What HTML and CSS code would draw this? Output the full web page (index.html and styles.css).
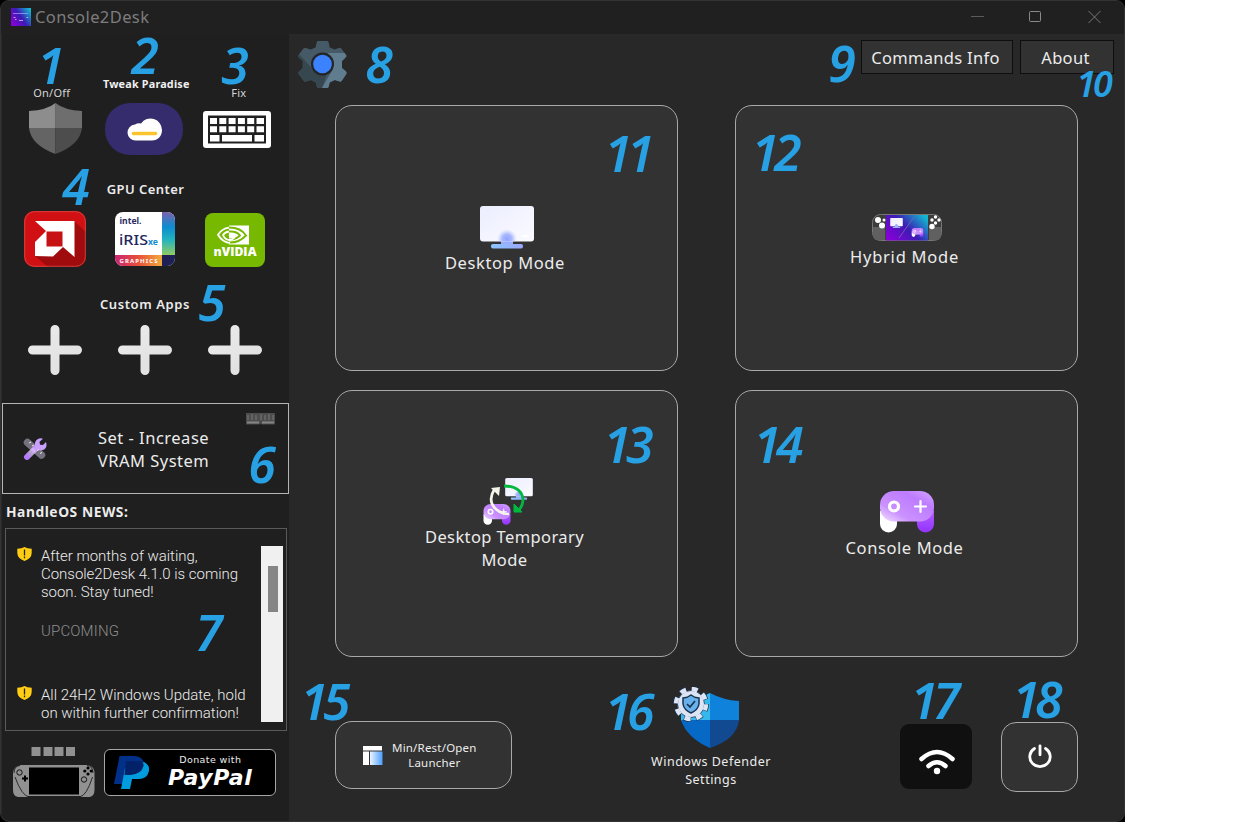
FILE: index.html
```html
<!DOCTYPE html>
<html lang="en">
<head>
<meta charset="utf-8">
<title>Console2Desk</title>
<link rel="stylesheet" href="styles.css">
</head>
<body>
<svg class="defs" width="0" height="0" aria-hidden="true">
  <defs>
    <linearGradient id="pad" x1="0" y1="1" x2="1" y2="0"><stop offset="0" stop-color="#f4e6ff"/><stop offset=".3" stop-color="#cb91ff"/><stop offset=".7" stop-color="#bd7cff"/><stop offset="1" stop-color="#d6a6ff"/></linearGradient>
    <linearGradient id="leg" x1="0" y1="0" x2="0" y2="1"><stop offset="0" stop-color="#b25cff"/><stop offset="1" stop-color="#9333ff"/></linearGradient>
    <linearGradient id="scr" x1="0" y1="0" x2="1" y2="1"><stop offset="0" stop-color="#eceeff"/><stop offset="1" stop-color="#fafaff"/></linearGradient>
    <linearGradient id="stand" x1="0" y1="0" x2="1" y2="0"><stop offset="0" stop-color="#8cc5ff"/><stop offset="1" stop-color="#9aa8ff"/></linearGradient>
    <radialGradient id="glow"><stop offset="0" stop-color="#8fa2ff"/><stop offset=".5" stop-color="#9dafff" stop-opacity=".85"/><stop offset="1" stop-color="#c8d0ff" stop-opacity="0"/></radialGradient>
    <linearGradient id="neon" x1="0" y1=".8" x2="1" y2=".2"><stop offset="0" stop-color="#8800d8"/><stop offset=".5" stop-color="#3c1bb5"/><stop offset="1" stop-color="#12b5cf"/></linearGradient>
    <linearGradient id="plus" x1="0" y1="0" x2="1" y2="1"><stop offset="0" stop-color="#ececec"/><stop offset="1" stop-color="#dedede"/></linearGradient>
    <clipPath id="screen-clip"><rect width="54" height="35.500" rx="3"/></clipPath>
    <symbol id="monitor" viewBox="0 0 54 43">
      <path d="M21 33h12v6H21z" fill="#9aaeff"/>
      <rect x="11" y="38" width="32" height="4.500" rx="2" fill="url(#stand)"/>
      <rect width="54" height="35.500" rx="3" fill="url(#scr)"/>
      <g clip-path="url(#screen-clip)"><circle cx="27" cy="33" r="10" fill="url(#glow)"/></g>
      <path d="M42 30h6" stroke="#fff" stroke-width="1.500" stroke-linecap="round"/>
    </symbol>
    <symbol id="gamepad" viewBox="0 0 54 42">
      <path d="M0 20h17v13a8.500 8.500 0 0 1-17 0z" fill="#fff"/>
      <path d="M37 20h17v13a8.500 8.500 0 0 1-17 0z" fill="url(#leg)"/>
      <rect width="54" height="30.500" rx="14" fill="url(#pad)"/>
      <circle cx="14" cy="15.500" r="4.500" fill="none" stroke="#fff" stroke-width="3.200"/>
      <path d="M35 15.500h11M40.500 10v11" stroke="#fff" stroke-width="2.200" stroke-linecap="round"/>
    </symbol>
    <symbol id="add" viewBox="0 0 54 50">
      <path d="M22.500 4.500a4.500 4.500 0 0 1 9 0v16h18a4.500 4.500 0 0 1 0 9h-18v16a4.500 4.500 0 0 1-9 0v-16h-18a4.500 4.500 0 0 1 0-9h18z" fill="url(#plus)"/>
    </symbol>
    <symbol id="alert" viewBox="0 0 15 14">
      <path d="M7.500 0Q10 1.700 14.700 1.800V6Q14.500 11.500 7.500 14 .5 11.500.3 6V1.800Q5 1.700 7.500 0z" fill="#ffcd12"/>
      <path d="M7.500 2.600v5.800M7.500 9.600v1.600" stroke="#222" stroke-width="1.300"/>
    </symbol>
  </defs>
</svg>
<div class="window">
  <header class="titlebar">
    <svg class="app-icon" viewBox="0 0 20 18"><rect width="20" height="18" fill="url(#neon)"/><path d="M2 5.500h15" stroke="#c0b7ff" stroke-width="1" opacity=".6"/><path d="M2.500 9.500h2M4 11.500h1.500M15.500 9.500h1.500M8 12.500h4" stroke="#fff" stroke-width="1.200" opacity=".6"/></svg>
    <span class="app-name">Console2Desk</span>
    <svg class="controls" viewBox="0 0 132 14" fill="none" stroke="#777"><path d="M1 6.500h13" stroke="#5b5b5b"/><rect x="59.500" y="1.500" width="11" height="10" rx="1" stroke="#8a8a8a"/><path d="M118.500 1l12 12M130.500 1L118.500 13"/></svg>
  </header>
  <div class="body">
    <aside class="sidebar">
      <section class="tools">
        <div class="tool on-off"><span class="small-label">On/Off</span>
          <svg class="ic-shield" viewBox="0 0 53 51"><path d="M26.500 0Q35 7 53 8v17H26.500z" fill="#6e6e6e"/><path d="M26.500 0Q18 7 0 8v17h26.500z" fill="#8d8d8d"/><path d="M0 25h26.500v26Q2 42 0 25z" fill="#646464"/><path d="M53 25H26.500v26Q51 42 53 25z" fill="#4d4d4d"/></svg></div>
        <div class="tool tweak"><span class="small-label strong">Tweak Paradise</span>
          <svg class="ic-cloud" viewBox="0 0 78 52"><rect width="78" height="52" rx="25" fill="#342c6d"/><path d="M31 37.500a8 8 0 0 1-1-16Q33 19.500 36 20.500a11.500 11.500 0 0 1 21 6.500c0 6-4 10.500-10 10.500z" fill="#fff"/><path d="M28.500 30.500h22" stroke="#fcc42c" stroke-width="3.600" stroke-linecap="round"/></svg></div>
        <div class="tool fix"><span class="small-label">Fix</span>
          <svg class="ic-keys" viewBox="0 0 68 37"><rect width="68" height="37" rx="3" fill="#fff"/><rect x="5" y="4.500" width="58" height="28" fill="#202020"/><g fill="#fff"><path d="M7 7h7v6H7zM16.300 7h7v6h-7zM25.600 7h7v6h-7zM34.900 7h7v6h-7zM44.200 7h7v6h-7zM53.500 7h7.500v6h-7.500zM7 15.300h7v6H7zM16.300 15.300h7v6h-7zM25.600 15.300h7v6h-7zM34.900 15.300h7v6h-7zM44.200 15.300h7v6h-7zM53.500 15.300h7.500v6h-7.500zM7 24h9.500v6.500H7zM19 24h30v6.500H19zM51.500 24H61v6.500h-9.500z"/></g></svg></div>
      </section>
      <h2 class="group-title gpu-title">GPU Center</h2>
      <div class="trio gpu">
        <svg class="ic-amd" viewBox="0 0 62 56"><defs><clipPath id="amdc"><rect width="62" height="56" rx="10"/></clipPath></defs><g clip-path="url(#amdc)"><rect width="62" height="56" fill="#d01012"/><path d="M50 10l12 11v35H24L11 45z" fill="#a00c0d"/><path d="M11 10h39.500v36L39 36H22V20z" fill="#fff"/><path d="M11 45V31l11-11v16h17l-10 9.500z" fill="#fff"/><path d="M22.500 20.500h16v15h-16z" fill="#c71214"/></g><rect x=".7" y=".7" width="60.600" height="54.600" rx="9.500" fill="none" stroke="#e25b5b" stroke-width="1" opacity=".6"/></svg>
        <svg class="ic-intel" viewBox="0 0 60 54"><defs><clipPath id="intc"><rect width="60" height="54" rx="8"/></clipPath><linearGradient id="ib" x1="0" y1="0" x2="0" y2="1"><stop offset="0" stop-color="#7c62ae"/><stop offset=".35" stop-color="#0c8dd0"/><stop offset=".65" stop-color="#24b5bd"/><stop offset="1" stop-color="#93ca62"/></linearGradient><linearGradient id="ir"><stop offset="0" stop-color="#c92472"/><stop offset=".5" stop-color="#e8503a"/><stop offset="1" stop-color="#f3aa3c"/></linearGradient></defs><g clip-path="url(#intc)"><rect width="60" height="54" fill="#fff"/><rect x="47" width="13" height="43" fill="url(#ib)"/><rect y="43" width="47" height="11" fill="url(#ir)"/><rect x="47" y="43" width="13" height="11" fill="#1f2155"/></g><text class="intel-a" x="4.500" y="12" textLength="22" lengthAdjust="spacingAndGlyphs">intel.</text><text class="intel-b" x="4" y="32.500" textLength="29" lengthAdjust="spacingAndGlyphs">iRIS</text><text class="intel-c" x="33" y="32.500" textLength="10" lengthAdjust="spacingAndGlyphs">xe</text><text class="intel-d" x="4.500" y="51" textLength="38">GRAPHICS</text></svg>
        <svg class="ic-nv" viewBox="0 0 60 54"><rect width="60" height="54" rx="8" fill="#77b900"/><path d="M24 12.500h20v19H24z" fill="#fff"/><g fill="none" stroke="#77b900" stroke-width="1.900"><path d="M24 14.500q12 0 17 8-7 7.500-17 7"/><path d="M24 18.500q8-.5 11 4-5 4.500-11 4"/></g><g fill="none" stroke="#fff" stroke-width="1.800"><path d="M24 14.700q-7 1-11 7 4 7 12 8.500"/><path d="M24 18.500q-4 .5-6 3.500 2 5 7 5 3-.5 5-3"/></g><circle cx="26" cy="22" r="2.300" fill="#fff"/><text class="nv" x="8.500" y="42.500" textLength="43" lengthAdjust="spacingAndGlyphs">nVIDIA</text></svg>
      </div>
      <h2 class="group-title apps-title">Custom Apps</h2>
      <div class="trio apps">
        <svg class="ic-add"><use href="#add"/></svg><svg class="ic-add"><use href="#add"/></svg><svg class="ic-add"><use href="#add"/></svg>
      </div>
      <button class="vram">
        <svg class="ic-tools" viewBox="0 0 24 22"><defs><linearGradient id="tl" x1="0" y1="1" x2="1" y2="0"><stop offset="0" stop-color="#b479ff"/><stop offset=".45" stop-color="#b5a6c8"/><stop offset=".65" stop-color="#d9b5ff"/><stop offset="1" stop-color="#ba83ff"/></linearGradient></defs><path d="M4.500 4.500L18.500 17" stroke="#77717f" stroke-width="7.500" stroke-linecap="round"/><path d="M4 19L14 9" stroke="url(#tl)" stroke-width="6" stroke-linecap="round"/><path d="M20 .8l-3.500 3 .5 3 3 .3 3-3q1.800 6-3 8-6 1.500-8-3.500-1-6 4-8 2-.6 4 .2z" fill="#caa0ff"/><path d="M6 5l2-1M9 8l2-1M14 12.500l2-1M17 15.500l2-1" stroke="#eee"/></svg>
        <span class="vram-label">Set - Increase<br>VRAM System</span>
        <svg class="ic-ram" viewBox="0 0 29 12"><path d="M0 0h29v11.500H15.500l-1-1-1 1H0z" fill="#4d4d4d"/><path d="M2 2v5M6 1v6M10 2v5M15 1v6M19 2v5M23 1v6M27 2v5" stroke="#6b6b6b" stroke-width="1.500"/><path d="M1 9.500h12M16 9.500h12" stroke="#858585" stroke-width="1.800"/></svg>
      </button>
      <h2 class="news-title">HandleOS NEWS:</h2>
      <section class="news">
        <div class="news-list">
          <article class="news-item first"><svg class="ic-alert"><use href="#alert"/></svg><p>After months of waiting,<br>Console2Desk 4.1.0 is coming<br>soon. Stay tuned!</p></article>
          <p class="tag">UPCOMING</p>
          <article class="news-item"><svg class="ic-alert"><use href="#alert"/></svg><p>All 24H2 Windows Update, hold<br>on within further confirmation!</p></article>
        </div>
        <div class="scroll"><div class="thumb"></div></div>
      </section>
      <footer class="side-foot">
        <svg class="ic-device" viewBox="0 0 82 51"><path d="M18.500 0h9v9h-9zM30.500 0h9v9h-9zM41.500 0h9v9h-9zM53 0h9v9h-9z" fill="#919191"/><path d="M8 18h66q7 1 7.500 7v18q0 6-5 7H67v-1H15v1H5q-5-1-5-7V25q1-6 8-7z" fill="#919191"/><path d="M16 20.500h50v27H16z" fill="#000"/><g fill="none" stroke="#111"><path d="M7 18.500Q1 19 1 26M2 30q7 19 14 20M74 18.500q6 .5 6 7.500M79.500 30q-6 19-13 20" stroke-width=".8"/><circle cx="6.500" cy="25.500" r="2.700"/><circle cx="71" cy="32.500" r="2.700"/></g><path d="M9 31.500h6M12 28.500v6" stroke="#000" stroke-width="2"/><g fill="#000"><circle cx="75" cy="21" r="1.600"/><circle cx="75" cy="27" r="1.600"/><circle cx="71.800" cy="24" r="1.600"/><circle cx="78.200" cy="24" r="1.600"/></g></svg>
        <div class="paypal">
          <svg class="ic-pp" viewBox="0 0 36 34"><path d="M5.500 0h15q10 1 9 9-2 10-13 10h-5L9 28H0z" fill="#003087"/><path d="M30 6q6 3 5 9-2 8-10 8h-7l-2 10H7l4-21z" fill="#009cde"/><path d="M12 5h14q4 1 3.500 5-2 8-13 9h-6z" fill="#012169"/></svg>
          <div class="pp-text"><span class="pp-small">Donate with</span><span class="pp-big">PayPal</span></div>
        </div>
      </footer>
    </aside>
    <main class="main">
      <nav class="topbar">
        <svg class="ic-gear" viewBox="0 0 49 47"><defs><clipPath id="gc"><path d="M20 0h9q1.500 0 1.800 2l.9 4.500 5 2 4-1.500q2-.6 3 1l4.300 6q1 1.500-.5 2.500L44 20v7l4 3.500q1 1 .3 2.500L44 39.500q-1 1.500-2.500 1l-4.800-1.500-5 2.500-1 4q-.3 1.500-2 1.500h-8q-1.500 0-1.900-1.500l-.9-4-5-2.500L8 40.500q-1.500.5-2.500-1L.6 33q-.8-1.500.4-2.500L4.800 27v-7L.8 16.500q-1-1-.2-2.500L5 8q1-1.500 2.800-1l4.800 1.500 5-2 .9-4.500q.3-2 1.500-2z"/></clipPath></defs><g clip-path="url(#gc)"><path d="M0 0h49v47H0z" fill="#455a66"/><path d="M0 12l20 22-20 13z" fill="#37474f"/><path d="M10 26l20 4-6 17H0z" fill="#37474f"/><path d="M30 12h19v35H24l11-19z" fill="#607d8f"/></g><circle cx="24.500" cy="23" r="11.500" fill="#252525"/><circle cx="24.500" cy="23" r="9.300" fill="#3b82ff"/></svg>
        <button class="top-btn cmd">Commands Info</button><button class="top-btn about">About</button>
      </nav>
      <section class="cards">
        <button class="card c1"><svg class="ic-mon"><use href="#monitor"/></svg><span>Desktop Mode</span></button>
        <button class="card c2"><svg class="ic-hybrid" viewBox="0 0 70 28"><rect x=".5" y=".5" width="69" height="26" rx="8" fill="#3c3c3c" stroke="#777"/><path d="M1 13h12v13H5q-4 0-4-5zM69 13H57v13h8q4 0 4-5z" fill="#606060"/><rect x="14" y="1" width="42" height="25.500" fill="url(#neon)"/><path d="M27 24L42 3" stroke="#786ca5" stroke-width=".8"/><g fill="#fff"><circle cx="6" cy="6" r="3"/><circle cx="10" cy="11.500" r="3"/><circle cx="12" cy="6" r="1.500"/><circle cx="63.500" cy="3" r="1.700"/><circle cx="60" cy="6" r="1.700"/><circle cx="67" cy="6" r="1.700"/><circle cx="63.500" cy="9" r="1.700"/><circle cx="60" cy="12.500" r="2.700"/></g><use href="#monitor" x="18" y="4" width="13" height="10"/><use href="#gamepad" x="39" y="14" width="13" height="9"/></svg><span>Hybrid Mode</span></button>
        <button class="card c3"><svg class="ic-temp" viewBox="0 0 50 47"><use href="#monitor" x="22" y="0" width="28" height="22"/><use href="#gamepad" x="0" y="26" width="28" height="21"/><path d="M11 12Q4 24 14 32q5 4 12 4" fill="none" stroke="#f4f4ea" stroke-width="2.700"/><path d="M8 10l9-1-1 9" fill="#f4f4ea"/><path d="M21 8q17 0 19 13 0 7-5 12" fill="none" stroke="#00b83e" stroke-width="2.800"/><path d="M31 26v8h8z" fill="#00b83e" stroke="#00b83e"/></svg><span>Desktop Temporary<br>Mode</span></button>
        <button class="card c4"><svg class="ic-pad"><use href="#gamepad"/></svg><span>Console Mode</span></button>
      </section>
      <footer class="actions">
        <button class="launcher"><svg class="ic-win" viewBox="0 0 21 19"><defs><linearGradient id="wg"><stop offset="0" stop-color="#eef4ff"/><stop offset="1" stop-color="#4ba0ff"/></linearGradient></defs><path d="M0 0h19v4.500H0zM0 5.500h6V19H0z" fill="#fff"/><path d="M7 5.500h12.500V19H7z" fill="url(#wg)"/></svg><span>Min/Rest/Open<br>Launcher</span></button>
        <div class="defender"><svg class="ic-def" viewBox="0 0 67 62"><path d="M37 6Q50 13 66 14v20H37z" fill="#0f83dc"/><path d="M37 6Q24 13 8 14v20h29z" fill="#35b8ee"/><path d="M8 33h29v28Q14 51 8 33z" fill="#0669c5"/><path d="M37 33h29Q64 52 37 61z" fill="#114a91"/><circle cx="18" cy="17" r="15.600" fill="none" stroke="#1b3550" stroke-width="4.800" stroke-dasharray="7 5.250"/><circle cx="18" cy="17" r="13.500" fill="#dce4f6" stroke="#1b3550" stroke-width=".8"/><circle cx="18" cy="17" r="15" fill="none" stroke="#dce4f6" stroke-width="4.500" stroke-dasharray="6 5.780" stroke-dashoffset="-.3"/><path d="M18 8q3 2.500 8 3v6q-1 6-8 9-7-3-8-9v-6q5-.5 8-3z" fill="#69b1ec" stroke="#17334d" stroke-width="1.500"/><path d="M14 17l3 3 5-6" fill="none" stroke="#17334d" stroke-width="1.700"/></svg><span>Windows Defender<br>Settings</span></div>
        <button class="wifi"><svg class="ic-wifi" viewBox="0 0 36 26" fill="none" stroke="#fff" stroke-linecap="round"><path d="M2.500 10Q18-4 33.500 10" stroke-width="4.500"/><path d="M9.500 17q8.500-7.500 17 0" stroke-width="4.500"/><circle cx="18" cy="22" r="3.200" fill="#fff" stroke="none"/></svg></button>
        <button class="power"><svg class="ic-power" viewBox="0 0 24 24" fill="none" stroke="#fff" stroke-linecap="round" stroke-width="2.800"><path d="M6.500 4.500a10.200 9.800 0 1 0 11 0"/><path d="M12 1.800v9"/></svg></button>
      </footer>
    </main>
  </div>
  <div class="marks">
    <b class="mark n1">1</b><b class="mark n2">2</b><b class="mark n3">3</b><b class="mark n4">4</b><b class="mark n5">5</b><b class="mark n6">6</b><b class="mark n7">7</b><b class="mark n8">8</b><b class="mark n9">9</b><b class="mark pair n10">10</b><b class="mark pair n11">11</b><b class="mark pair n12">12</b><b class="mark pair n13">13</b><b class="mark pair n14">14</b><b class="mark pair n15">15</b><b class="mark pair n16">16</b><b class="mark pair n17">17</b><b class="mark pair n18">18</b>
  </div>
</div>
</body>
</html>
```
FILE: styles.css
```css
* { box-sizing: border-box; }
body { margin: 0; width: 1260px; height: 822px; overflow: hidden; background: #fff; font-family: "Noto Sans", sans-serif; color: #ececec; }
.defs { position: absolute; }
h2, p { margin: 0; }
button { margin: 0; padding: 0; font: inherit; color: inherit; background: none; border: 0; }
svg { display: block; flex: none; }
.window { position: relative; width: 1125px; height: 822px; background: #1f1f1f; border: 1px solid #333; border-radius: 9px; box-shadow: 0 0 0 9px #000; clip-path: inset(0); display: flex; flex-direction: column; overflow: hidden; }
.titlebar { height: 33px; flex: none; display: flex; align-items: center; padding: 0 22px 2px 10px; background: #202020; }
.app-icon { width: 20px; height: 18px; }
.app-name { margin-left: 4px; flex: 1; font-size: 16.5px; color: #7d7d7d; letter-spacing: .4px; line-height: 30px; }
.controls { width: 132px; height: 14px; margin-top: 1px; }
.body { display: flex; flex: 1; min-height: 0; }
.sidebar { width: 288px; flex: none; display: flex; flex-direction: column; border-left: 1px solid #292929; }
.main { flex: 1; background: #282828; display: flex; flex-direction: column; }

.tools { height: 121px; display: grid; grid-template-columns: repeat(3, 90.5px); padding-left: 8px; }
.tool { display: flex; flex-direction: column; align-items: center; padding-top: 51px; }
.tweak { padding: 42px 4px 0 0; }
.fix { padding-left: 1px; }
.small-label { font-size: 11px; line-height: 16px; white-space: nowrap; color: #d5d5d5; letter-spacing: .2px; }
.on-off .small-label { margin-right: 7px; }
.fix .small-label { margin-left: 4px; }
.strong { font-weight: 700; font-size: 10.8px; color: #f0f0f0; margin-left: 5px; letter-spacing: .2px; }
.ic-shield { width: 53px; height: 51px; margin-top: 2px; }
.ic-cloud { width: 78px; height: 52px; margin-top: 11px; }
.ic-keys { width: 68px; height: 37px; margin-top: 10px; }
.group-title { font-size: 13px; font-weight: 600; line-height: 20px; height: 20px; text-align: center; letter-spacing: .45px; }
.gpu-title { margin-top: 24px; }
.trio { display: grid; grid-template-columns: repeat(3, 90px); justify-items: center; padding-left: 8px; }
.gpu { margin-top: 11px; height: 57px; align-items: center; }
.ic-amd { width: 62px; height: 56px; }
.ic-intel, .ic-nv { width: 60px; height: 54px; }
.ic-nv { margin-top: 2px; }
.intel-a { font: 700 9px "Noto Sans", sans-serif; fill: #2a2c62; }
.intel-b { font: 500 15px "Noto Sans", sans-serif; fill: #24265c; }
.intel-c { font: 700 8px "Noto Sans", sans-serif; fill: #168dce; }
.intel-d { font: 700 6px "Noto Sans", sans-serif; fill: #fff; }
.nv { font: 800 11.500px "Open Sans", sans-serif; fill: #fff; }
.apps-title { margin-top: 27px; padding-right: 1px; letter-spacing: .6px; }
.apps { margin-top: 11px; height: 50px; }
.ic-add { width: 54px; height: 50px; }
.vram { width: 287px; height: 91px; margin-top: 28px; border: 1px solid #b5b5b5; display: grid; grid-template-columns: 64px 1fr 42px; }
.ic-tools { width: 24px; height: 22px; align-self: center; margin-left: 20px; }
.vram-label { align-self: center; font-size: 16.5px; line-height: 23px; letter-spacing: .5px; margin: 0 0 0 -6px; }
.ic-ram { width: 29px; height: 12px; margin-top: 9px; }
.news-title { height: 34px; font-size: 13.8px; font-weight: 700; line-height: 36px; padding-left: 4px; letter-spacing: .55px; }
.news { width: 282px; height: 203px; margin-left: 3px; border: 1px solid #5a5a5a; display: flex; padding: 17px 3px 8px 11px; }
.news-list { flex: 1; padding-top: .6px; font: 300 15px/18.400px Roboto, sans-serif; letter-spacing: -.03px; }
.news-item { display: flex; gap: 9px; white-space: nowrap; }
.ic-alert { width: 15px; height: 14px; margin-top: .5px; }
.tag { margin: 20px 0 45.5px 24px; color: #8d8d8d; letter-spacing: .15px; }
.scroll { width: 22px; height: 176px; background: #f0f0f0; padding: 20px 5px 0 7px; margin-left: -1px; }
.thumb { height: 46px; background: #858585; }
.side-foot { display: flex; gap: 9px; padding: 16px 0 0 11px; }
.ic-device { width: 82px; height: 51px; }
.paypal { width: 172px; height: 47px; margin-top: 2px; background: #000; border: 1px solid #a6a6a6; border-radius: 6px; display: flex; padding-left: 9px; align-items: center; gap: 18px; }
.ic-pp { width: 36px; height: 34px; }
.pp-text { display: flex; flex-direction: column; align-items: center; font-family: "DejaVu Sans", sans-serif; }
.pp-small { font-size: 9.500px; line-height: 12px; letter-spacing: .4px; margin: -3px 0 0 0; }
.pp-big { font-size: 22px; line-height: 23px; font-weight: 700; font-style: italic; color: #fff; letter-spacing: .7px; }

.topbar { height: 71px; padding: 6px 10px 0 9px; display: flex; gap: 7px; }
.ic-gear { width: 49px; height: 47px; margin: 1px auto 0 0; }
.top-btn { height: 34px; background: #323232; border: 1px solid #0e0e0e; font-size: 16.5px; letter-spacing: .3px; white-space: nowrap; padding-right: 3px; }
.cmd { width: 152px; }
.about { width: 94px; }
.cards { display: grid; grid-template-columns: 343px 343px; grid-template-rows: 266px 267px; gap: 19px 57px; padding-left: 46px; }
.card { border: 1px solid #a8a8a8; border-radius: 17px; background: #323232; display: flex; flex-direction: column; align-items: center; justify-content: flex-start; font-size: 16.5px; line-height: 23px; letter-spacing: .6px; }
.card span { margin-right: 4px; }
.ic-mon { width: 54px; height: 43px; margin-top: 100px; }
.c1 span { margin-top: 2px; margin-right: 3px; }
.ic-hybrid { width: 70px; height: 28px; margin-top: 108px; }
.c2 span { margin-top: 3px; letter-spacing: .75px; }
.ic-temp { width: 50px; height: 47px; margin: 87px 0 0 2px; }
.c3 span { margin-top: 0; margin-right: 4px; letter-spacing: .4px; }
.ic-pad { width: 54px; height: 42px; margin-top: 100px; }
.c4 span { margin-top: 3px; }
.actions { display: flex; align-items: flex-start; padding-left: 46px; }
.launcher { width: 177px; height: 68px; margin-top: 64px; border: 1px solid #a8a8a8; border-radius: 17px; background: #323232; display: flex; align-items: center; gap: 8px; padding-left: 27px; font-size: 11.500px; line-height: 15px; letter-spacing: .2px; }
.ic-win { width: 21px; height: 19px; }
.defender { width: 140px; margin: 30px 0 0 129px; display: flex; flex-direction: column; align-items: center; font-size: 12.5px; line-height: 18px; text-align: center; letter-spacing: .5px; }
.ic-def { width: 67px; height: 62px; margin: 0 10px 4px 0; }
.wifi { width: 72px; height: 65px; margin: 67px 0 0 119px; border-radius: 9px; background: #101010; display: flex; justify-content: center; padding: 25px 0 0 1px; }
.ic-wifi { width: 36px; height: 26px; }
.power { width: 77px; height: 70px; margin: 65px 0 0 29px; border: 1px solid #a8a8a8; border-radius: 15px; background: #323232; display: flex; justify-content: center; padding-top: 21px; }
.ic-power { width: 24px; height: 24px; }

/* Callout numbers are centred on their own anchor points over the window. */
.marks { position: absolute; left: -1px; top: -1px; }
.mark { position: absolute; font-size: 50px; font-weight: 600; font-style: italic; line-height: 36px; letter-spacing: -2px; color: #28a0e4; transform: translate(-50%, -54%); }
.pair { letter-spacing: -5px; }
.n1 { left: 50px; top: 66px; }
.n2 { left: 144px; top: 56px; }
.n3 { left: 234px; top: 66px; }
.n4 { left: 75px; top: 187px; }
.n5 { left: 211px; top: 303px; }
.n6 { left: 261px; top: 465px; }
.n7 { left: 208px; top: 633px; }
.n8 { left: 378px; top: 65px; }
.n9 { left: 841px; top: 64px; }
.n10 { left: 1093px; top: 85px; font-size: 36px; line-height: 26px; letter-spacing: -3px; }
.n11 { left: 627px; top: 154px; }
.n12 { left: 774px; top: 153px; }
.n13 { left: 626px; top: 445px; }
.n14 { left: 776px; top: 445px; }
.n15 { left: 323px; top: 702px; }
.n16 { left: 627px; top: 712px; }
.n17 { left: 933px; top: 701px; }
.n18 { left: 1035px; top: 700px; }
```
